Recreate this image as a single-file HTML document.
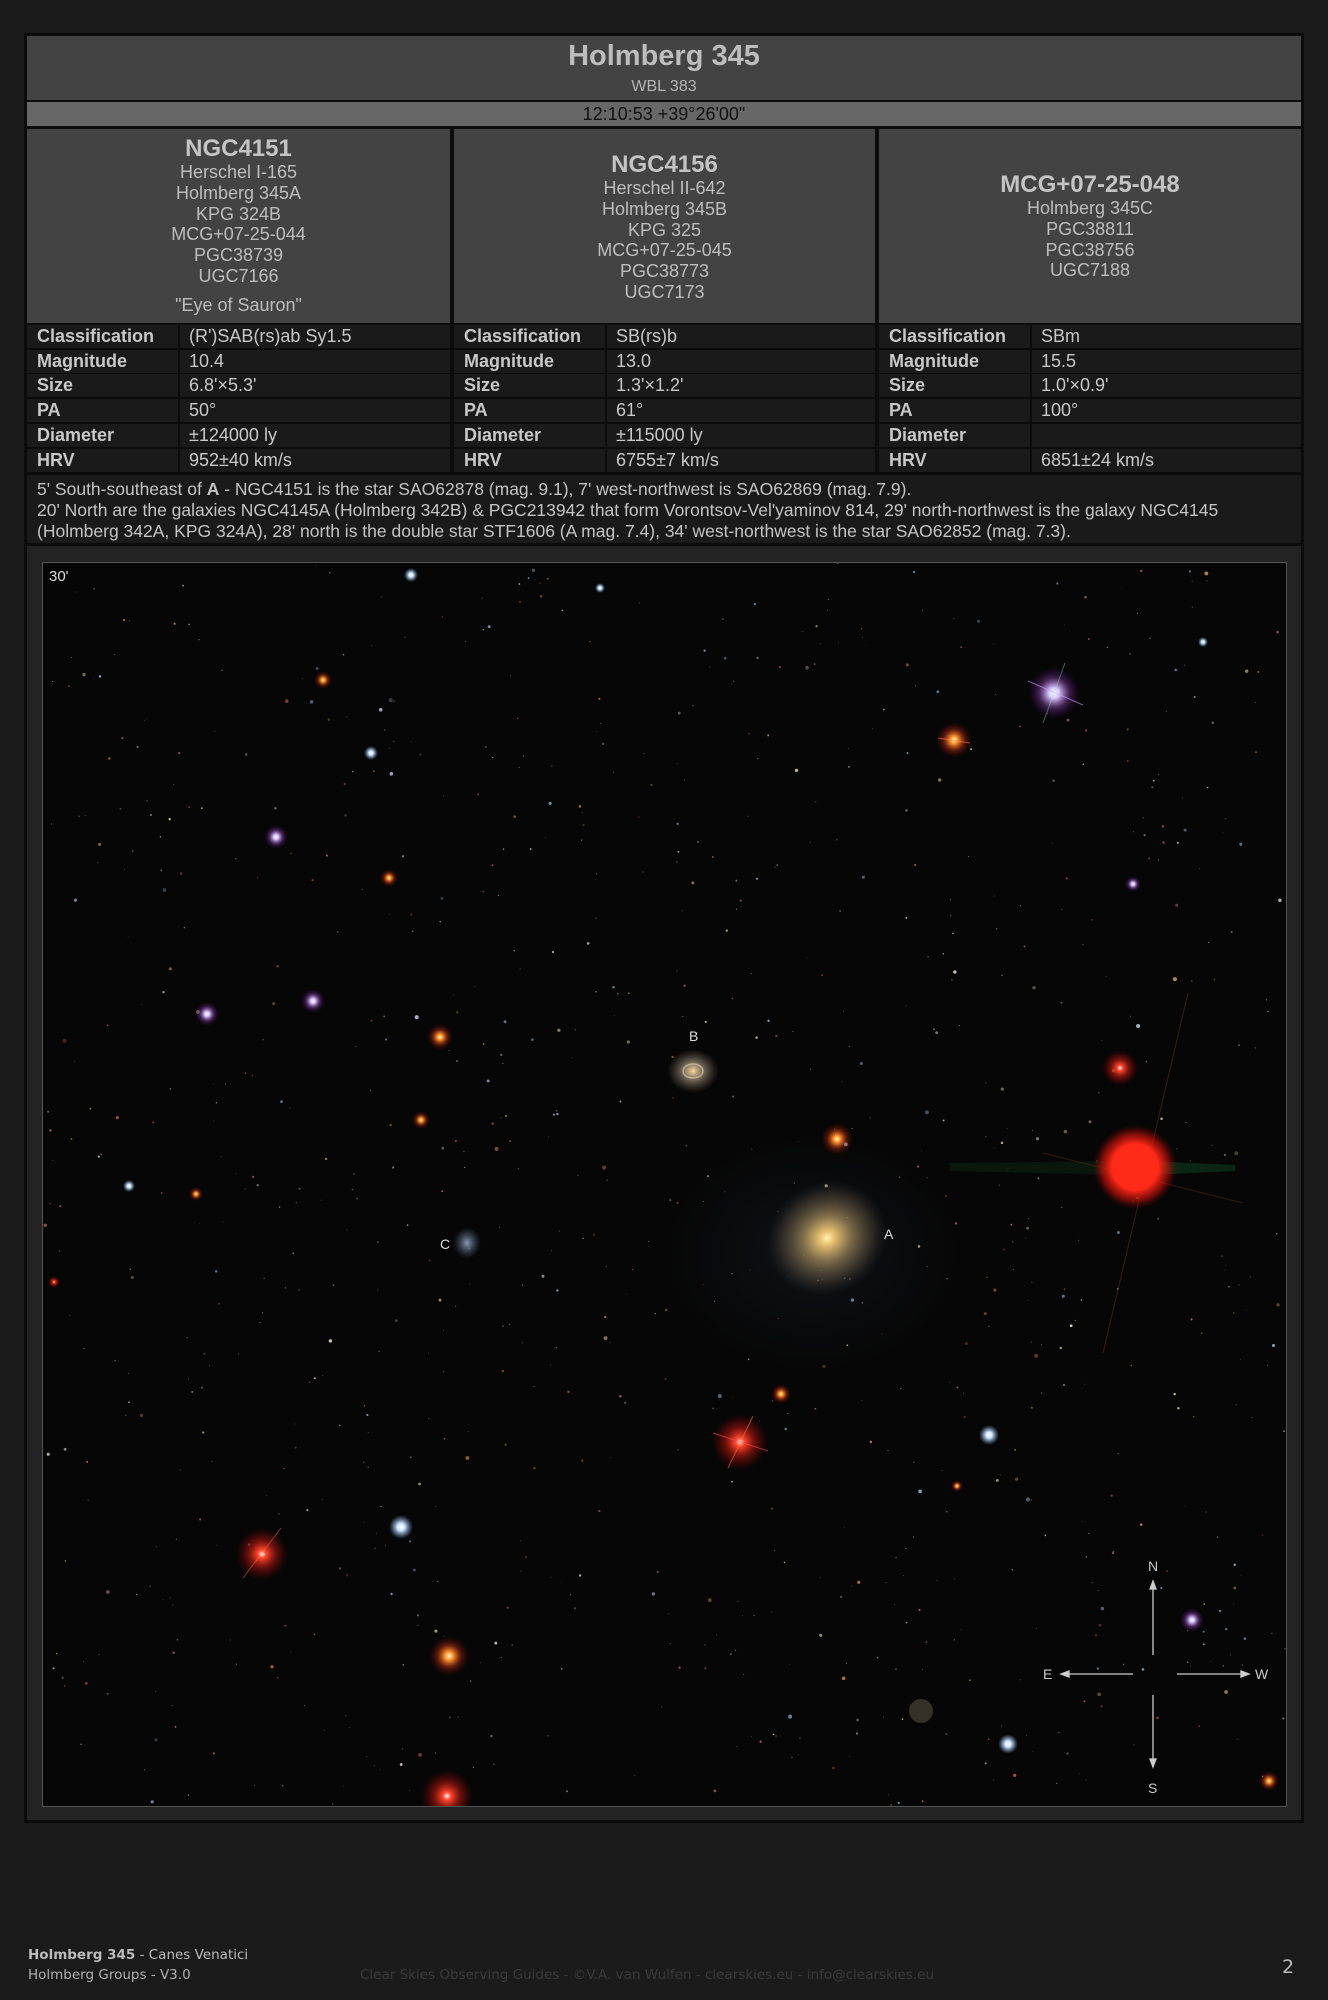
<!DOCTYPE html>
<html><head><meta charset="utf-8">
<style>
*{margin:0;padding:0;box-sizing:border-box}
body{width:1328px;height:2000px;background:#1b1b1b;position:relative;overflow:hidden;font-family:"Liberation Sans",Arial,sans-serif;color:#bbb}
.a{position:absolute}
#frame{left:24px;top:33px;width:1280px;height:1790px;background:#0c0c0c}
.panel{background:#434343}
.c{text-align:center}
.col{top:129px;height:194px;background:#434343;text-align:center;font-size:18px;line-height:20.8px;color:#bdbdbd}
.col b{font-size:24px;display:block;line-height:26px;color:#c4c4c4}
.row{height:23px;background:#1a1a1a;font-size:18px;line-height:23px;color:#c8c8c8}
.row span{position:absolute;top:0}
.lab{font-weight:bold;left:10px}
.vsep{position:absolute;top:0;width:2px;height:23px;background:#0c0c0c}
.foot{font-family:"DejaVu Sans",sans-serif;font-size:13.5px}
</style></head><body>
<div class="a" id="frame"></div>
<div class="a panel c" style="left:27px;top:36px;width:1274px;height:64px">
 <div style="font-size:29px;font-weight:bold;color:#bdbdbd;position:absolute;top:4px;width:100%">Holmberg 345</div>
 <div style="font-size:16px;color:#b5b5b5;position:absolute;top:42px;width:100%">WBL 383</div>
</div>
<div class="a c" style="left:27px;top:102px;width:1274px;height:24px;background:#676767;color:#111;font-size:18px;line-height:24px">12:10:53 +39°26'00"</div>

<div class="a col" style="left:27px;width:423px;padding-top:7px"><b>NGC4151</b>Herschel I-165<br>Holmberg 345A<br>KPG 324B<br>MCG+07-25-044<br>PGC38739<br>UGC7166<div style="margin-top:8px">"Eye of Sauron"</div></div>
<div class="a col" style="left:454px;width:421px;padding-top:23px"><b>NGC4156</b>Herschel II-642<br>Holmberg 345B<br>KPG 325<br>MCG+07-25-045<br>PGC38773<br>UGC7173</div>
<div class="a col" style="left:879px;width:422px;padding-top:43px"><b>MCG+07-25-048</b>Holmberg 345C<br>PGC38811<br>PGC38756<br>UGC7188</div>

<div id="tbl"></div>

<div class="a" style="left:27px;top:475px;width:1274px;height:68px;background:#1a1a1a;font-size:17.5px;line-height:21px;color:#c4c4c4;padding:4px 0 0 10px;white-space:nowrap">5' South-southeast of <b>A</b> - NGC4151 is the star SAO62878 (mag. 9.1), 7' west-northwest is SAO62869 (mag. 7.9).<br>20' North are the galaxies NGC4145A (Holmberg 342B) &amp; PGC213942 that form Vorontsov-Vel'yaminov 814, 29' north-northwest is the galaxy NGC4145<br>(Holmberg 342A, KPG 324A), 28' north is the double star STF1606 (A mag. 7.4), 34' west-northwest is the star SAO62852 (mag. 7.3).</div>

<div class="a" style="left:27px;top:546px;width:1274px;height:1274px;background:#232323"></div>
<div class="a" style="left:42px;top:562px;width:1245px;height:1245px;background:#555"></div>
<svg class="a" id="sky" style="left:43px;top:563px" width="1243" height="1243" viewBox="0 0 1243 1243">
<defs>
<radialGradient id="gR"><stop offset="0" stop-color="#fff"/><stop offset=".15" stop-color="#ff4a30"/><stop offset=".5" stop-color="rgba(220,30,20,.5)"/><stop offset="1" stop-color="rgba(150,0,0,0)"/></radialGradient>
<radialGradient id="gBig"><stop offset="0" stop-color="#ff2a18"/><stop offset=".55" stop-color="#ff2a18"/><stop offset=".8" stop-color="rgba(230,20,10,.5)"/><stop offset="1" stop-color="rgba(150,0,0,0)"/></radialGradient>
<radialGradient id="gO"><stop offset="0" stop-color="#fff6c0"/><stop offset=".2" stop-color="#ff9a30"/><stop offset=".6" stop-color="rgba(220,60,20,.35)"/><stop offset="1" stop-color="rgba(150,0,0,0)"/></radialGradient>
<radialGradient id="gP"><stop offset="0" stop-color="#fff"/><stop offset=".2" stop-color="#d8c8ff"/><stop offset=".6" stop-color="rgba(160,80,200,.35)"/><stop offset="1" stop-color="rgba(100,0,150,0)"/></radialGradient>
<radialGradient id="gW"><stop offset="0" stop-color="#fff"/><stop offset=".3" stop-color="#cfe8ff"/><stop offset="1" stop-color="rgba(120,160,220,0)"/></radialGradient>
<radialGradient id="gA"><stop offset="0" stop-color="#fff2b0"/><stop offset=".12" stop-color="#e8c070"/><stop offset=".4" stop-color="rgba(200,170,110,.6)"/><stop offset=".75" stop-color="rgba(150,130,100,.25)"/><stop offset="1" stop-color="rgba(80,80,90,0)"/></radialGradient>
<radialGradient id="gH"><stop offset="0" stop-color="rgba(40,50,70,.25)"/><stop offset="1" stop-color="rgba(40,50,70,0)"/></radialGradient>
<radialGradient id="gB"><stop offset="0" stop-color="#ffd890"/><stop offset=".3" stop-color="rgba(200,180,150,.7)"/><stop offset="1" stop-color="rgba(120,110,100,0)"/></radialGradient>
<radialGradient id="gC"><stop offset="0" stop-color="rgba(170,190,220,.8)"/><stop offset="1" stop-color="rgba(80,100,140,0)"/></radialGradient>
</defs>
<rect width="1243" height="1243" fill="#060606"/>
<g id="dust"></g>
<path d="M907 600 L1080 598 L1080 612 L907 608Z" fill="#0a1a10" opacity=".9"/>
<path d="M1105 598 L1192 602 L1192 608 L1105 612Z" fill="#0d2a18" opacity=".9"/>
<line x1="1060" y1="790" x2="1145" y2="430" stroke="#a04020" stroke-width="1" opacity=".35"/>
<line x1="1000" y1="590" x2="1200" y2="640" stroke="#a04020" stroke-width="1" opacity=".3"/>
<circle cx="1092" cy="604" r="42" fill="url(#gBig)"/>
<ellipse cx="770" cy="690" rx="150" ry="120" fill="url(#gH)"/>
<ellipse cx="784" cy="675" rx="62" ry="56" fill="url(#gA)" transform="rotate(-30 784 675)"/>
<ellipse cx="650" cy="508" rx="26" ry="22" fill="url(#gB)"/>
<ellipse cx="650" cy="508" rx="10" ry="7" fill="none" stroke="rgba(230,210,170,.6)" stroke-width="1.5"/>
<ellipse cx="424" cy="680" rx="14" ry="16" fill="url(#gC)"/>
<g font-family="Liberation Sans,sans-serif" font-size="14" fill="#ddd">
<text x="646" y="478">B</text><text x="841" y="676">A</text><text x="397" y="686">C</text>
<text x="6" y="18" font-size="15">30'</text>
</g>
<g>
<circle cx="1011" cy="130" r="26" fill="url(#gP)"/><line x1="985" y1="118" x2="1040" y2="142" stroke="#c8a0ff" opacity=".6"/><line x1="1000" y1="160" x2="1022" y2="100" stroke="#80ff90" opacity=".4"/>
<circle cx="911" cy="177" r="18" fill="url(#gO)"/><line x1="895" y1="175" x2="927" y2="180" stroke="#ff8040" opacity=".6"/>
<circle cx="697" cy="879" r="28" fill="url(#gR)"/><line x1="670" y1="870" x2="725" y2="888" stroke="#ff5050" opacity=".6"/><line x1="685" y1="905" x2="710" y2="853" stroke="#ff7030" opacity=".6"/>
<circle cx="219" cy="991" r="26" fill="url(#gR)"/><line x1="200" y1="1015" x2="238" y2="965" stroke="#ff7030" opacity=".5"/>
<circle cx="406" cy="1093" r="20" fill="url(#gO)"/>
<circle cx="404" cy="1233" r="26" fill="url(#gR)"/>
<circle cx="1077" cy="505" r="18" fill="url(#gR)"/>
<circle cx="794" cy="576" r="16" fill="url(#gO)"/>
<circle cx="738" cy="831" r="10" fill="url(#gO)"/>
<circle cx="946" cy="872" r="10" fill="url(#gW)"/>
<circle cx="358" cy="964" r="12" fill="url(#gW)"/>
<circle cx="233" cy="274" r="12" fill="url(#gP)"/>
<circle cx="164" cy="451" r="12" fill="url(#gP)"/>
<circle cx="270" cy="438" r="12" fill="url(#gP)"/>
<circle cx="397" cy="474" r="13" fill="url(#gO)"/>
<circle cx="346" cy="315" r="9" fill="url(#gO)"/>
<circle cx="378" cy="557" r="9" fill="url(#gO)"/>
<circle cx="280" cy="117" r="9" fill="url(#gO)"/>
<circle cx="328" cy="190" r="7" fill="url(#gW)"/>
<circle cx="368" cy="12" r="7" fill="url(#gW)"/>
<circle cx="1149" cy="1057" r="12" fill="url(#gP)"/>
<circle cx="1226" cy="1218" r="10" fill="url(#gO)"/>
<circle cx="1090" cy="321" r="8" fill="url(#gP)"/>
<circle cx="86" cy="623" r="6" fill="url(#gW)"/>
<circle cx="153" cy="631" r="7" fill="url(#gO)"/>
<circle cx="11" cy="719" r="6" fill="url(#gR)"/>
<circle cx="965" cy="1181" r="10" fill="url(#gW)"/>
<circle cx="878" cy="1148" r="12" fill="rgba(200,180,140,.25)"/>
<circle cx="914" cy="923" r="6" fill="url(#gO)"/>
<circle cx="557" cy="25" r="5" fill="url(#gW)"/>
<circle cx="1160" cy="79" r="5" fill="url(#gW)"/>
</g>
<g stroke="#ccc" stroke-width="1.3" fill="#ccc">
<line x1="1110" y1="1020" x2="1110" y2="1092"/><path d="M1107 1026 L1110 1018 L1113 1026Z"/>
<line x1="1110" y1="1132" x2="1110" y2="1202"/><path d="M1107 1196 L1110 1204 L1113 1196Z"/>
<line x1="1020" y1="1111" x2="1090" y2="1111"/><path d="M1026 1108 L1018 1111 L1026 1114Z"/>
<line x1="1134" y1="1111" x2="1204" y2="1111"/><path d="M1198 1108 L1206 1111 L1198 1114Z"/>
</g>
<g font-family="Liberation Sans,sans-serif" font-size="14" fill="#ccc">
<text x="1105" y="1008">N</text><text x="1105" y="1230">S</text><text x="1000" y="1116">E</text><text x="1212" y="1116">W</text>
</g>
</svg>

<div class="a foot" style="left:28px;top:1947px;color:#bcbcbc"><b>Holmberg 345</b> - Canes Venatici</div>
<div class="a foot" style="left:28px;top:1967px;color:#b0b0b0">Holmberg Groups - V3.0</div>
<div class="a foot" style="left:360px;top:1967px;color:#3a3a3a">Clear Skies Observing Guides - ©V.A. van Wulfen - clearskies.eu - info@clearskies.eu</div>
<div class="a foot" style="left:1282px;top:1956px;color:#bbb;font-size:19px">2</div>

<script>
(function(){
var rows=[["Classification","(R')SAB(rs)ab Sy1.5","SB(rs)b","SBm"],["Magnitude","10.4","13.0","15.5"],["Size","6.8'×5.3'","1.3'×1.2'","1.0'×0.9'"],["PA","50°","61°","100°"],["Diameter","±124000 ly","±115000 ly",""],["HRV","952±40 km/s","6755±7 km/s","6851±24 km/s"]];
var labs=["Classification","Magnitude","Size","PA","Diameter","HRV"];
var cols=[[27,423],[454,421],[879,422]];
var h="";
for(var r=0;r<6;r++){var top=325+r*24.7;
 for(var c=0;c<3;c++){var L=cols[c][0],W=cols[c][1];
  h+='<div class="a row" style="left:'+L+'px;top:'+top+'px;width:'+W+'px"><span class="lab">'+labs[r]+'</span><div class="vsep" style="left:151px"></div><span style="left:162px">'+rows[r][c+1]+'</span></div>';}}
document.getElementById("tbl").innerHTML=h;
var s=12345;function rnd(){s=(s*16807)%2147483647;return s/2147483647;}
var g=document.getElementById("dust"),out="";
var cl=["#caa060","#d08040","#b0c8e0","#e0d090","#c06040","#90b0d0","#e8e0c0"];
for(var i=0;i<900;i++){var x=rnd()*1243,y=rnd()*1243,r=rnd()*rnd()*1.8+0.4,o=0.3+rnd()*0.6;
 out+='<circle cx="'+x.toFixed(1)+'" cy="'+y.toFixed(1)+'" r="'+r.toFixed(2)+'" fill="'+cl[Math.floor(rnd()*cl.length)]+'" opacity="'+o.toFixed(2)+'"/>';}
g.innerHTML=out;
})();
</script>
</body></html>
